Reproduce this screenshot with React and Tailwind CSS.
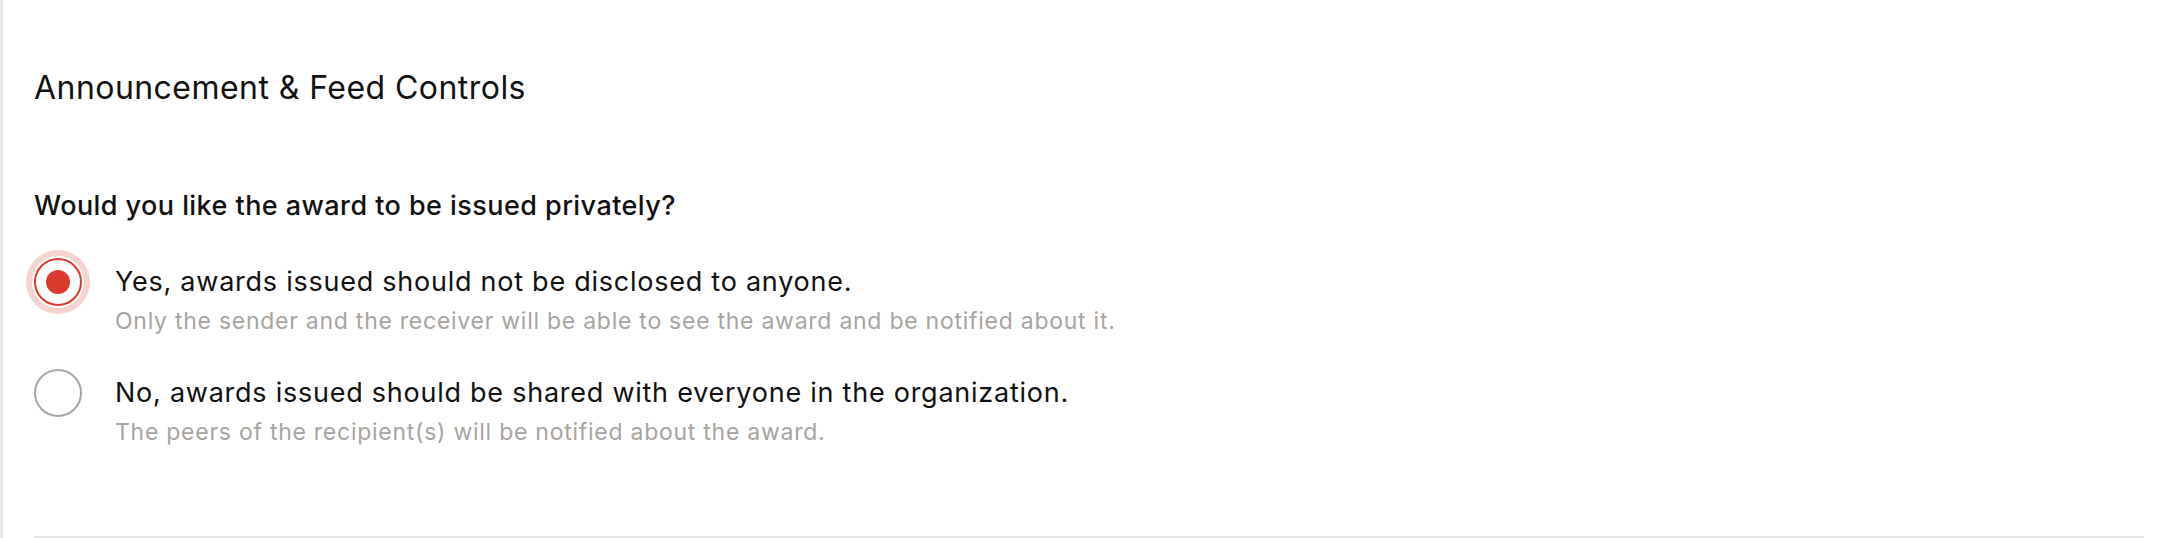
import React, { useState } from 'react';

const options = [
  {
    id: 'private',
    label: 'Yes, awards issued should not be disclosed to anyone.',
    hint: 'Only the sender and the receiver will be able to see the award and be notified about it.',
  },
  {
    id: 'public',
    label: 'No, awards issued should be shared with everyone in the organization.',
    hint: 'The peers of the recipient(s) will be notified about the award.',
  },
];

const Radio = ({ checked }) => (
  <div className="h-8 flex items-center shrink-0">
    {checked ? (
      <span className="w-12 h-12 rounded-full border-2 border-[#dc3a2f] bg-white flex items-center justify-center shadow-[0_0_0_2px_#ffffff,0_0_0_8px_#f7d3cf]">
        <span className="w-6 h-6 rounded-full bg-[#dc3a2f]" />
      </span>
    ) : (
      <span className="w-12 h-12 rounded-full border-2 border-[#aaa6a2] bg-white" />
    )}
  </div>
);

export default function App() {
  const [value, setValue] = useState('private');

  return (
    <div
      className="w-[2168px] h-[538px] bg-white border-l-[3px] border-[#e8e8e8] pl-[31px] pr-[24px] pt-[69px] flex flex-col"
      style={{ fontFamily: 'Inter, "Noto Sans", sans-serif' }}
    >
      {/* Section title */}
      <h2 className="text-[32px] leading-[38px] tracking-[0.45px] text-[#111111] font-normal">
        Announcement &amp; Feed Controls
      </h2>

      {/* Question */}
      <p className="mt-[83px] text-[27px] leading-[32px] tracking-[0.44px] font-medium text-[#111111]">
        Would you like the award to be issued privately?
      </p>

      <div className="mt-[44px] flex flex-col gap-[42px]">
        {options.map((opt) => (
          <label
            key={opt.id}
            className="flex items-start gap-[33px] cursor-pointer"
            onClick={() => setValue(opt.id)}
          >
            <Radio checked={value === opt.id} />
            <div className="flex flex-col gap-[9px]">
              <span className="text-[27px] leading-[32px] tracking-[0.75px] text-[#111111]">{opt.label}</span>
              <span className="text-[23px] leading-[28px] tracking-[0.74px] text-[#a8a4a0]">{opt.hint}</span>
            </div>
          </label>
        ))}
      </div>

      <div className="mt-auto h-[2px] bg-[#e5e5e5]" />
    </div>
  );
}
